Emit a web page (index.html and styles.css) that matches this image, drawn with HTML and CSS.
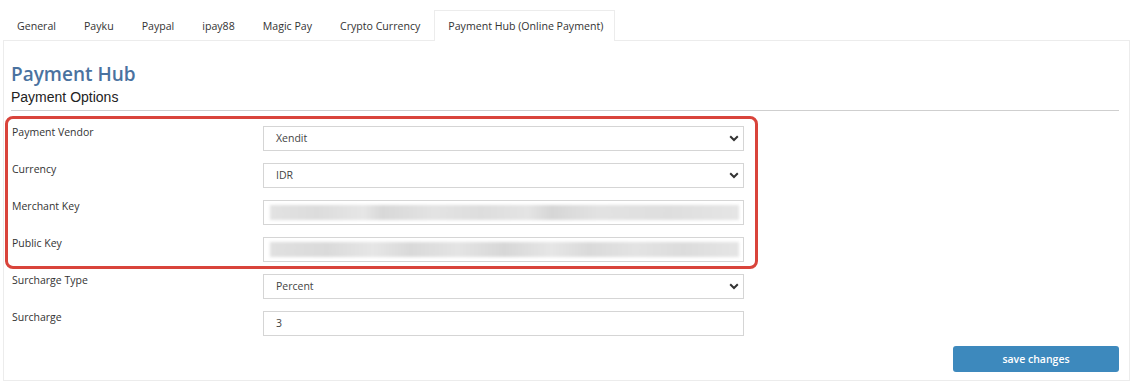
FILE: index.html
```html
<!DOCTYPE html>
<html>
<head>
<meta charset="utf-8">
<link rel="stylesheet" href="styles.css">
</head>
<body>
<div class="page">
  <ul class="tabs">
    <li class="tab">General</li>
    <li class="tab">Payku</li>
    <li class="tab">Paypal</li>
    <li class="tab">ipay88</li>
    <li class="tab">Magic Pay</li>
    <li class="tab">Crypto Currency</li>
    <li class="tab active">Payment Hub (Online Payment)</li>
  </ul>
  <div class="panel">
    <h2 class="title">Payment Hub</h2>
    <h3 class="subtitle">Payment Options</h3>
    <div class="rule"></div>
    <div class="form">
      <div class="highlight">
        <div class="row">
          <label class="label">Payment Vendor</label>
          <div class="control select"><span>Xendit</span><svg class="chev" viewBox="0 0 10 7" width="10" height="7"><path d="M1.2 1.3 L5 5 L8.8 1.3" fill="none" stroke="#333" stroke-width="2"/></svg></div>
        </div>
        <div class="row">
          <label class="label">Currency</label>
          <div class="control select"><span>IDR</span><svg class="chev" viewBox="0 0 10 7" width="10" height="7"><path d="M1.2 1.3 L5 5 L8.8 1.3" fill="none" stroke="#333" stroke-width="2"/></svg></div>
        </div>
        <div class="row">
          <label class="label">Merchant Key</label>
          <div class="control masked"><div class="blur blur-a"></div></div>
        </div>
        <div class="row">
          <label class="label">Public Key</label>
          <div class="control masked"><div class="blur blur-b"></div></div>
        </div>
      </div>
      <div class="row">
        <label class="label">Surcharge Type</label>
        <div class="control select"><span>Percent</span><svg class="chev" viewBox="0 0 10 7" width="10" height="7"><path d="M1.2 1.3 L5 5 L8.8 1.3" fill="none" stroke="#333" stroke-width="2"/></svg></div>
      </div>
      <div class="row">
        <label class="label">Surcharge</label>
        <div class="control"><span>3</span></div>
      </div>
    </div>
    <div class="actions">
      <button class="save">save changes</button>
    </div>
  </div>
</div>
</body>
</html>
```
FILE: styles.css
```css
* { box-sizing: border-box; }
html, body { margin: 0; padding: 0; background: #fff; }
body { font-family: "Open Sans", "Noto Sans", sans-serif; color: #333; }
.page { padding: 10px 6px 0 3px; }

.tabs {
  list-style: none;
  margin: 0;
  padding: 0;
  display: flex;
  height: 30px;
  position: relative;
  z-index: 1;
}
.tab {
  padding: 0 13px;
  font-size: 10.6px;
  line-height: 30px;
  color: #333;
  border: 1px solid transparent;
  border-bottom: none;
}
.tab.active {
  background: #fff;
  border-color: #ececec;
  padding-right: 11px;
  height: 31px;
}

.panel {
  border: 1px solid #ececec;
  height: 341px;
  padding: 20px 10px 0 7px;
  display: flex;
  flex-direction: column;
}
.title {
  margin: 0;
  font-size: 19px;
  font-weight: 600;
  color: #4a72a0;
  line-height: 26px;
}
.subtitle {
  margin: 2px 0 0;
  font-family: "Liberation Sans", Arial, sans-serif;
  font-size: 14px;
  font-weight: 400;
  color: #222;
  line-height: 16px;
}
.rule {
  margin-top: 5px;
  border-top: 1px solid #cfcfcf;
}

.form {
  margin-top: 15px;
  display: flex;
  flex-direction: column;
  gap: 12px;
  width: 733px;
}
.highlight {
  position: relative;
  display: flex;
  flex-direction: column;
  gap: 12px;
}
.highlight::after {
  content: "";
  position: absolute;
  top: -10px;
  bottom: -7px;
  left: -6px;
  right: -14px;
  border: 3px solid #d9443b;
  border-radius: 8px;
  pointer-events: none;
}
.row {
  display: grid;
  grid-template-columns: 252px 1fr;
  align-items: start;
  height: 25px;
}
.label {
  font-size: 10.5px;
  color: #333;
  line-height: 14px;
  margin-top: -1px;
  padding-left: 1px;
}
.control {
  height: 25px;
  border: 1px solid #d5d5d5;
  display: flex;
  align-items: center;
  padding: 0 0 1px 12px;
  font-size: 10.5px;
  color: #444;
  position: relative;
}
.select span { flex: 1; }
.chev { margin-right: 4px; }
.masked { padding: 0 4px 0 6px; }
.blur {
  width: 100%;
  height: 15px;
  filter: blur(1.5px);
}
.blur-a {
  background: linear-gradient(90deg, #e2e2e2 0%, #dcdcdc 10%, #e6e6e6 20%, #d8d8d8 24%, #e3e3e3 35%, #dddddd 45%, #e4e4e4 55%, #d6d6d6 60%, #e2e2e2 70%, #dedede 85%, #e5e5e5 100%);
}
.blur-b {
  background: linear-gradient(90deg, #e0e0e0 0%, #dadada 12%, #e6e6e6 22%, #d9d9d9 30%, #e4e4e4 40%, #d7d7d7 50%, #e6e6e6 60%, #dadada 68%, #e3e3e3 78%, #dcdcdc 88%, #e5e5e5 100%);
}

.actions {
  display: flex;
  justify-content: flex-end;
  margin-top: 10px;
}
.save {
  width: 166px;
  height: 26px;
  border: none;
  border-radius: 3px;
  background: #3d89bd;
  color: #fff;
  font-family: "Open Sans", "Noto Sans", sans-serif;
  font-size: 10.5px;
  font-weight: 600;
  cursor: pointer;
}
```
